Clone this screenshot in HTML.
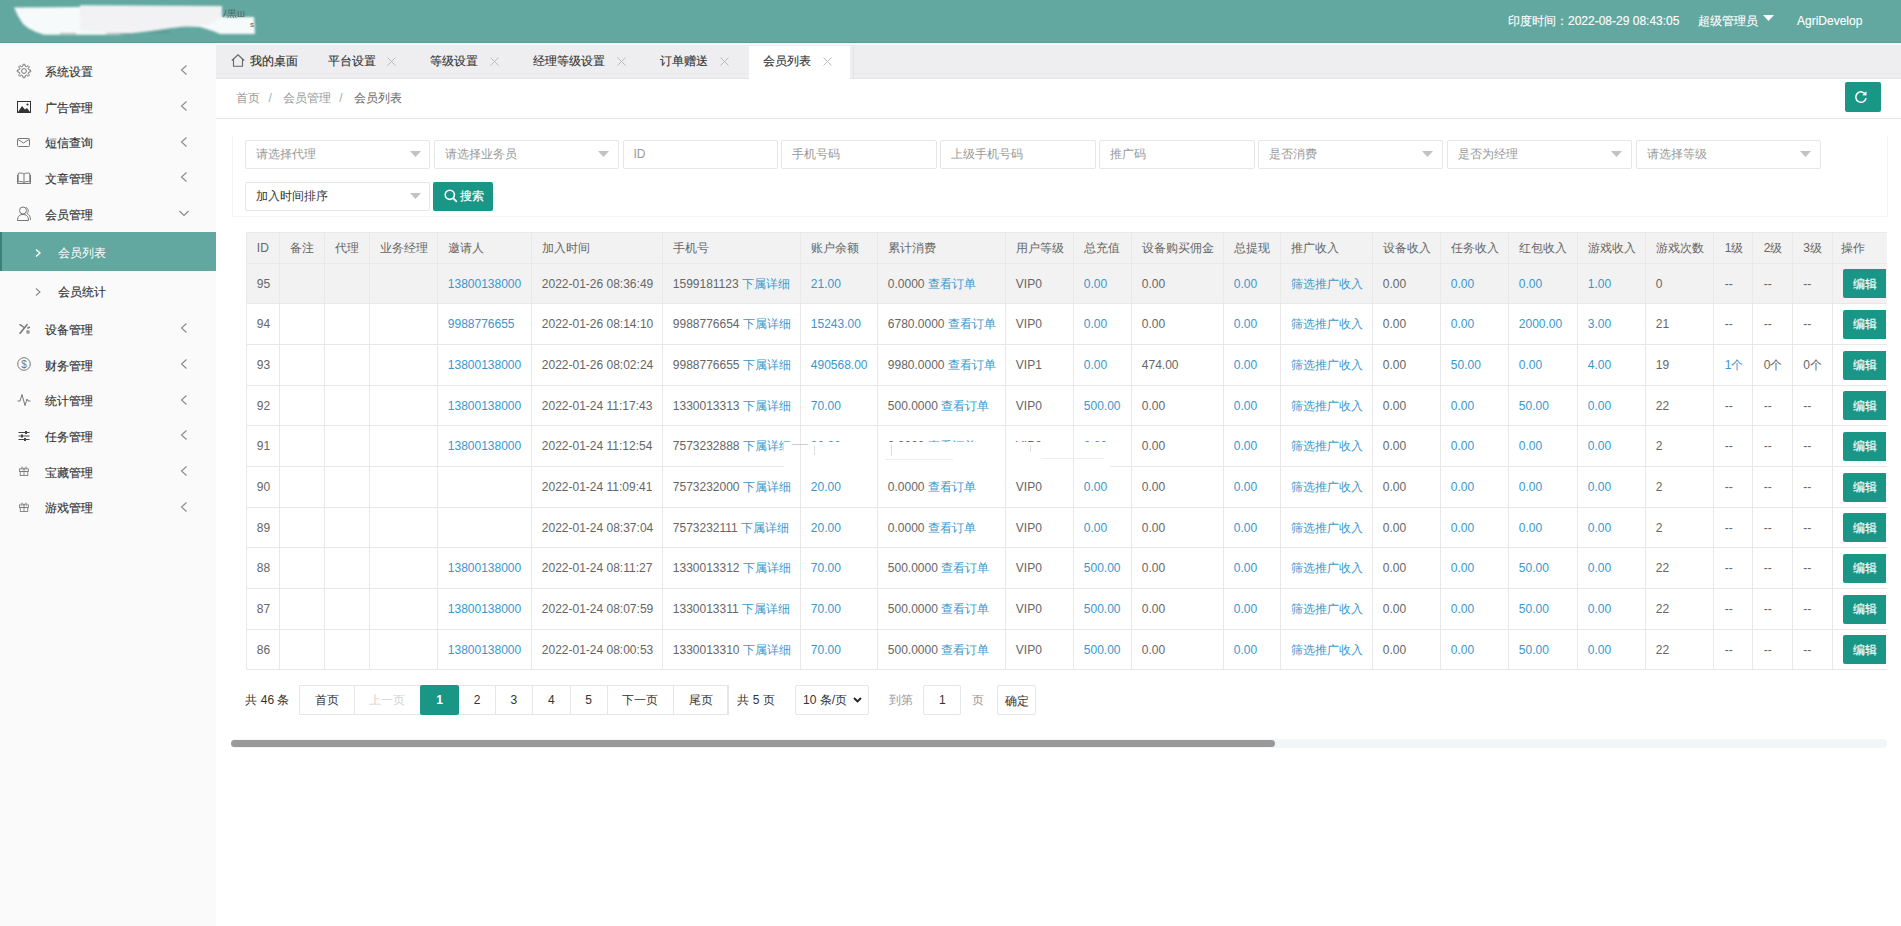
<!DOCTYPE html><html><head><meta charset="utf-8"><style>
*{margin:0;padding:0;box-sizing:border-box}
html,body{width:1901px;height:926px;overflow:hidden;background:#fff;font-family:"Liberation Sans",sans-serif;font-size:12px;color:#333}
.t{position:absolute;white-space:nowrap}
.b{-webkit-text-stroke:0.15px currentColor}
.b2{-webkit-text-stroke:0.12px currentColor}
.r{position:absolute}
svg{position:absolute;overflow:visible}
</style></head><body><div class="r" style="left:0px;top:0px;width:1901px;height:43px;background:#62a8a0"></div>
<div class="r" style="left:0px;top:42px;width:1901px;height:1px;background:#5a9c95"></div>
<svg style="left:0;top:0" width="280" height="45"><defs><filter id="bl" x="-10%" y="-30%" width="120%" height="160%"><feGaussianBlur stdDeviation="1"/></filter></defs><g filter="url(#bl)"><polygon points="14,7.5 80,7 80,5.3 222,6 222,17 254,17 255,34 220,34 213,31 200,27 185,26.5 171,28 150,31 118,34.7 44,34.7 36,32 28,28 23,24 18,16" fill="#f6fafa"/><polygon points="80,6 222,6.5 222,17 210,24 185,26.5 150,30 120,33 80,30" fill="#eeeaec" opacity="0.55"/><rect x="60" y="33" width="16" height="1.2" fill="#555" opacity="0.5"/><rect x="106" y="33" width="24" height="1.2" fill="#555" opacity="0.5"/><rect x="150" y="31" width="20" height="1.2" fill="#555" opacity="0.35"/></g><text x="222" y="16.5" font-size="10" fill="#555" opacity="0.8" font-family="Liberation Sans">ﾉ黒ш</text><text x="250" y="27" font-size="8" fill="#555" font-family="Liberation Sans">s</text></svg>
<div class="t b2" style="left:1508px;top:13.10px;line-height:16px;color:#fff;font-size:12px;">印度时间：2022-08-29 08:43:05</div>
<div class="t b2" style="left:1697.5px;top:13.10px;line-height:16px;color:#fff;font-size:12px;">超级管理员</div>
<svg style="left:1763px;top:15px" width="11" height="7"><polygon points="0,0 11,0 5.5,6" fill="#fff"/></svg>
<div class="t b2" style="left:1797px;top:13.10px;line-height:16px;color:#fff;font-size:12px;">AgriDevelop</div>
<div class="r" style="left:0px;top:43px;width:216px;height:883px;background:#fafafa"></div>
<svg style="left:16.6px;top:64.10000000000001px" width="14" height="14" viewBox="0 0 14 14"><path d="M11.88 5.91 L13.74 6.12 L13.74 7.88 L11.88 8.09 L11.22 9.68 L12.39 11.14 L11.14 12.39 L9.68 11.22 L8.09 11.88 L7.88 13.74 L6.12 13.74 L5.91 11.88 L4.32 11.22 L2.86 12.39 L1.61 11.14 L2.78 9.68 L2.12 8.09 L0.26 7.88 L0.26 6.12 L2.12 5.91 L2.78 4.32 L1.61 2.86 L2.86 1.61 L4.32 2.78 L5.91 2.12 L6.12 0.26 L7.88 0.26 L8.09 2.12 L9.68 2.78 L11.14 1.61 L12.39 2.86 L11.22 4.32Z" fill="none" stroke="#777" stroke-width="1" stroke-linejoin="round"/><circle cx="7" cy="7" r="2.4" fill="none" stroke="#777" stroke-width="1"/></svg>
<div class="t b" style="left:44.7px;top:63.90px;line-height:16px;color:#333;font-size:12px;">系统设置</div>
<svg style="left:179.7px;top:65.2px" width="8" height="10" viewBox="0 0 8 10"><path d="M6.5 0.5 L1.5 5 L6.5 9.5" fill="none" stroke="#888" stroke-width="1.1"/></svg>
<svg style="left:16.6px;top:100.8px" width="14" height="12" viewBox="0 0 14 12"><rect x="0.5" y="0.5" width="13" height="11" fill="none" stroke="#333" stroke-width="1"/><path d="M1 11 L5 5 L8 8.5 L10 7 L13 11 Z" fill="#333"/><circle cx="10.5" cy="3.5" r="1.1" fill="#333"/></svg>
<div class="t b" style="left:44.7px;top:99.60px;line-height:16px;color:#333;font-size:12px;">广告管理</div>
<svg style="left:179.7px;top:100.89999999999999px" width="8" height="10" viewBox="0 0 8 10"><path d="M6.5 0.5 L1.5 5 L6.5 9.5" fill="none" stroke="#888" stroke-width="1.1"/></svg>
<svg style="left:17.1px;top:138.0px" width="13" height="9" viewBox="0 0 13 9"><rect x="0.5" y="0.5" width="12" height="8" rx="1" fill="none" stroke="#777" stroke-width="1"/><path d="M1 1.5 L6.5 5 L12 1.5" fill="none" stroke="#777" stroke-width="1"/></svg>
<div class="t b" style="left:44.7px;top:135.30px;line-height:16px;color:#333;font-size:12px;">短信查询</div>
<svg style="left:179.7px;top:136.60000000000002px" width="8" height="10" viewBox="0 0 8 10"><path d="M6.5 0.5 L1.5 5 L6.5 9.5" fill="none" stroke="#888" stroke-width="1.1"/></svg>
<svg style="left:16.6px;top:172.2px" width="14" height="12" viewBox="0 0 14 12"><path d="M7 2 C5 0.8 3 0.8 1.2 1.5 V10 C3 9.3 5 9.3 7 10.5 C9 9.3 11 9.3 12.8 10 V1.5 C11 0.8 9 0.8 7 2 Z M7 2 V10.5 M0.5 3 V11.5 H13.5 V3" fill="none" stroke="#777" stroke-width="1"/></svg>
<div class="t b" style="left:44.7px;top:171.00px;line-height:16px;color:#333;font-size:12px;">文章管理</div>
<svg style="left:179.7px;top:172.3px" width="8" height="10" viewBox="0 0 8 10"><path d="M6.5 0.5 L1.5 5 L6.5 9.5" fill="none" stroke="#888" stroke-width="1.1"/></svg>
<svg style="left:16.6px;top:206.39999999999998px" width="14" height="15" viewBox="0 0 14 15"><circle cx="6" cy="4.5" r="3.5" fill="none" stroke="#777" stroke-width="1"/><path d="M0.5 14.5 C0.5 10 3 8.5 6 8.5 C9 8.5 11.5 10 11.5 14.5 Z" fill="none" stroke="#777" stroke-width="1"/><path d="M9 1.5 C11.5 2 12 6 10 7.5 C12.5 8.5 13.5 11 13.5 14" fill="none" stroke="#777" stroke-width="0.9"/></svg>
<div class="t b" style="left:44.7px;top:206.70px;line-height:16px;color:#333;font-size:12px;">会员管理</div>
<svg style="left:178.5px;top:210.0px" width="10" height="7" viewBox="0 0 10 7"><path d="M0.5 1 L5 5.5 L9.5 1" fill="none" stroke="#888" stroke-width="1.1"/></svg>
<div class="r" style="left:0px;top:232.1px;width:216px;height:39.3px;background:#62a8a0"></div>
<div class="r" style="left:0px;top:232.1px;width:2px;height:39.3px;background:#3e7f78"></div>
<svg style="left:34.5px;top:248.5px" width="6" height="8" viewBox="0 0 6 8"><path d="M1 0.5 L5 4 L1 7.5" fill="none" stroke="#fff" stroke-width="1.4"/></svg>
<div class="t " style="left:57.7px;top:244.50px;line-height:16px;color:#fff;font-size:12px;">会员列表</div>
<svg style="left:34.5px;top:288px" width="6" height="8" viewBox="0 0 6 8"><path d="M1 0.5 L5 4 L1 7.5" fill="none" stroke="#888" stroke-width="1.1"/></svg>
<div class="t b" style="left:57.7px;top:284.00px;line-height:16px;color:#333;font-size:12px;">会员统计</div>
<svg style="left:17.6px;top:322.59999999999997px" width="12" height="12" viewBox="0 0 12 12"><path d="M2 1.7 L5.4 4" stroke="#777" stroke-width="1.5" stroke-linecap="round"/><path d="M9 1.7 L2.1 10.2" stroke="#777" stroke-width="1.6" stroke-linecap="round"/><ellipse cx="10.6" cy="4.6" rx="1.6" ry="1" transform="rotate(-20 10.6 4.6)" fill="#777"/><circle cx="10" cy="9" r="1.9" fill="#999"/></svg>
<div class="t b" style="left:44.7px;top:321.90px;line-height:16px;color:#333;font-size:12px;">设备管理</div>
<svg style="left:179.7px;top:323.2px" width="8" height="10" viewBox="0 0 8 10"><path d="M6.5 0.5 L1.5 5 L6.5 9.5" fill="none" stroke="#888" stroke-width="1.1"/></svg>
<svg style="left:16.6px;top:357.3px" width="14" height="14" viewBox="0 0 14 14"><circle cx="7" cy="7" r="6.3" fill="none" stroke="#777" stroke-width="1"/><text x="7" y="10.5" font-size="10" text-anchor="middle" fill="#777" font-family="Liberation Sans">$</text></svg>
<div class="t b" style="left:44.7px;top:357.60px;line-height:16px;color:#333;font-size:12px;">财务管理</div>
<svg style="left:179.7px;top:358.90000000000003px" width="8" height="10" viewBox="0 0 8 10"><path d="M6.5 0.5 L1.5 5 L6.5 9.5" fill="none" stroke="#888" stroke-width="1.1"/></svg>
<svg style="left:16.6px;top:393.0px" width="14" height="14" viewBox="0 0 14 14"><path d="M0.5 8 H3 L5 1.5 L8 12.5 L10 6 L11 8 H13.5" fill="none" stroke="#777" stroke-width="1"/></svg>
<div class="t b" style="left:44.7px;top:393.30px;line-height:16px;color:#333;font-size:12px;">统计管理</div>
<svg style="left:179.7px;top:394.6px" width="8" height="10" viewBox="0 0 8 10"><path d="M6.5 0.5 L1.5 5 L6.5 9.5" fill="none" stroke="#888" stroke-width="1.1"/></svg>
<svg style="left:17.6px;top:429.7px" width="12" height="12" viewBox="0 0 12 12"><path d="M0.5 2.5 H11.5 M0.5 6 H11.5 M0.5 9.5 H11.5" stroke="#444" stroke-width="1"/><rect x="7" y="1" width="2" height="3" fill="#444"/><rect x="3" y="4.5" width="2" height="3" fill="#444"/><rect x="6" y="8" width="2" height="3" fill="#444"/></svg>
<div class="t b" style="left:44.7px;top:429.00px;line-height:16px;color:#333;font-size:12px;">任务管理</div>
<svg style="left:179.7px;top:430.3px" width="8" height="10" viewBox="0 0 8 10"><path d="M6.5 0.5 L1.5 5 L6.5 9.5" fill="none" stroke="#888" stroke-width="1.1"/></svg>
<svg style="left:18.6px;top:466.4px" width="10" height="10" viewBox="0 0 12 12"><rect x="0.5" y="3.5" width="11" height="3" fill="none" stroke="#777"/><rect x="1.5" y="6.5" width="9" height="5" fill="none" stroke="#777"/><path d="M6 3.5 V11.5 M6 3.5 C4 0 1.5 1.5 3.5 3.5 M6 3.5 C8 0 10.5 1.5 8.5 3.5" fill="none" stroke="#777"/></svg>
<div class="t b" style="left:44.7px;top:464.70px;line-height:16px;color:#333;font-size:12px;">宝藏管理</div>
<svg style="left:179.7px;top:466.0px" width="8" height="10" viewBox="0 0 8 10"><path d="M6.5 0.5 L1.5 5 L6.5 9.5" fill="none" stroke="#888" stroke-width="1.1"/></svg>
<svg style="left:18.6px;top:502.09999999999997px" width="10" height="10" viewBox="0 0 12 12"><rect x="0.5" y="3.5" width="11" height="3" fill="none" stroke="#777"/><rect x="1.5" y="6.5" width="9" height="5" fill="none" stroke="#777"/><path d="M6 3.5 V11.5 M6 3.5 C4 0 1.5 1.5 3.5 3.5 M6 3.5 C8 0 10.5 1.5 8.5 3.5" fill="none" stroke="#777"/></svg>
<div class="t b" style="left:44.7px;top:500.40px;line-height:16px;color:#333;font-size:12px;">游戏管理</div>
<svg style="left:179.7px;top:501.7px" width="8" height="10" viewBox="0 0 8 10"><path d="M6.5 0.5 L1.5 5 L6.5 9.5" fill="none" stroke="#888" stroke-width="1.1"/></svg>
<div class="r" style="left:216px;top:43px;width:1685px;height:36px;background:#eeeef0"></div>
<div class="r" style="left:0px;top:43px;width:1901px;height:1.5px;background:#eef9f7"></div>
<div class="r" style="left:216px;top:73px;width:1685px;height:1px;background:#e9e9eb"></div>
<div class="r" style="left:216px;top:78px;width:1685px;height:1px;background:#e4e4e6"></div>
<svg style="left:231px;top:54px" width="14" height="13" viewBox="0 0 14 13"><path d="M0.8 6.5 L7 0.8 L13.2 6.5 M2.5 5 V12.3 H11.5 V5" fill="none" stroke="#666" stroke-width="1.1"/></svg>
<div class="t b" style="left:249.7px;top:53.20px;line-height:16px;color:#333;font-size:12px;">我的桌面</div>
<div class="t b2" style="left:328px;top:53.20px;line-height:16px;color:#333;font-size:12px;">平台设置</div>
<svg style="left:387.0px;top:57.0px" width="9" height="9" viewBox="0 0 9 9"><path d="M0.5 0.5 L8.5 8.5 M8.5 0.5 L0.5 8.5" stroke="#bbb" stroke-width="1"/></svg>
<div class="t b2" style="left:429.8px;top:53.20px;line-height:16px;color:#333;font-size:12px;">等级设置</div>
<svg style="left:490.2px;top:57.0px" width="9" height="9" viewBox="0 0 9 9"><path d="M0.5 0.5 L8.5 8.5 M8.5 0.5 L0.5 8.5" stroke="#bbb" stroke-width="1"/></svg>
<div class="t b2" style="left:533.3px;top:53.20px;line-height:16px;color:#333;font-size:12px;">经理等级设置</div>
<svg style="left:616.8px;top:57.0px" width="9" height="9" viewBox="0 0 9 9"><path d="M0.5 0.5 L8.5 8.5 M8.5 0.5 L0.5 8.5" stroke="#bbb" stroke-width="1"/></svg>
<div class="t b2" style="left:660px;top:53.20px;line-height:16px;color:#333;font-size:12px;">订单赠送</div>
<svg style="left:720.0px;top:57.0px" width="9" height="9" viewBox="0 0 9 9"><path d="M0.5 0.5 L8.5 8.5 M8.5 0.5 L0.5 8.5" stroke="#bbb" stroke-width="1"/></svg>
<div class="r" style="left:749.2px;top:45.5px;width:101.3px;height:33.5px;background:#fff"></div>
<div class="r" style="left:852.5px;top:45.5px;width:1px;height:33.5px;background:#e2e2e4"></div>
<div class="t b2" style="left:763.4px;top:53.20px;line-height:16px;color:#333;font-size:12px;">会员列表</div>
<svg style="left:823.2px;top:57.0px" width="9" height="9" viewBox="0 0 9 9"><path d="M0.5 0.5 L8.5 8.5 M8.5 0.5 L0.5 8.5" stroke="#bbb" stroke-width="1"/></svg>
<div class="t " style="left:236.2px;top:89.70px;line-height:16px;color:#999;font-size:12px;">首页</div>
<div class="t " style="left:268.5px;top:89.70px;line-height:16px;color:#aaa;font-size:12px;">/</div>
<div class="t " style="left:282.5px;top:89.70px;line-height:16px;color:#999;font-size:12px;">会员管理</div>
<div class="t " style="left:339.2px;top:89.70px;line-height:16px;color:#aaa;font-size:12px;">/</div>
<div class="t " style="left:354px;top:89.70px;line-height:16px;color:#666;font-size:12px;">会员列表</div>
<div class="r" style="left:216px;top:118px;width:1685px;height:1px;background:#e6e6e6"></div>
<div class="r" style="left:1844.6px;top:82.2px;width:36.4px;height:29.8px;background:#1a9687;border-radius:2px"></div>
<svg style="left:1854px;top:90px" width="14" height="14" viewBox="0 0 14 14"><path d="M11.6 4.6 A5.2 5.2 0 1 0 12.1 8.2" fill="none" stroke="#fff" stroke-width="1.5"/><path d="M12.6 1.2 L12.4 5.6 L8.2 5.2 Z" fill="#fff"/></svg>
<div class="r" style="left:231.5px;top:136px;width:1656.5px;height:81px;border:1px solid #f4f4f4;border-top:none;background:#fff"></div>
<div class="r" style="left:244.8px;top:140px;width:185.7px;height:28.80000000000001px;border:1px solid #e6e6e6;background:#fff;border-radius:2px"></div>
<div class="t " style="left:255.8px;top:146.40px;line-height:16px;color:#999;font-size:12px;">请选择代理</div>
<svg style="left:409.5px;top:151.4px" width="11" height="6"><polygon points="0,0 11,0 5.5,6" fill="#c2c2c2"/></svg>
<div class="r" style="left:433.5px;top:140px;width:185.20000000000005px;height:28.80000000000001px;border:1px solid #e6e6e6;background:#fff;border-radius:2px"></div>
<div class="t " style="left:444.5px;top:146.40px;line-height:16px;color:#999;font-size:12px;">请选择业务员</div>
<svg style="left:597.7px;top:151.4px" width="11" height="6"><polygon points="0,0 11,0 5.5,6" fill="#c2c2c2"/></svg>
<div class="r" style="left:622.5px;top:140px;width:155.89999999999998px;height:28.80000000000001px;border:1px solid #e6e6e6;background:#fff;border-radius:2px"></div>
<div class="t " style="left:633.5px;top:146.40px;line-height:16px;color:#999;font-size:12px;">ID</div>
<div class="r" style="left:781.3px;top:140px;width:155.5px;height:28.80000000000001px;border:1px solid #e6e6e6;background:#fff;border-radius:2px"></div>
<div class="t " style="left:792.3px;top:146.40px;line-height:16px;color:#999;font-size:12px;">手机号码</div>
<div class="r" style="left:940.1px;top:140px;width:155.60000000000002px;height:28.80000000000001px;border:1px solid #e6e6e6;background:#fff;border-radius:2px"></div>
<div class="t " style="left:951.1px;top:146.40px;line-height:16px;color:#999;font-size:12px;">上级手机号码</div>
<div class="r" style="left:1099px;top:140px;width:156px;height:28.80000000000001px;border:1px solid #e6e6e6;background:#fff;border-radius:2px"></div>
<div class="t " style="left:1110px;top:146.40px;line-height:16px;color:#999;font-size:12px;">推广码</div>
<div class="r" style="left:1258.3px;top:140px;width:184.79999999999995px;height:28.80000000000001px;border:1px solid #e6e6e6;background:#fff;border-radius:2px"></div>
<div class="t " style="left:1269.3px;top:146.40px;line-height:16px;color:#999;font-size:12px;">是否消费</div>
<svg style="left:1422.1px;top:151.4px" width="11" height="6"><polygon points="0,0 11,0 5.5,6" fill="#c2c2c2"/></svg>
<div class="r" style="left:1446.6px;top:140px;width:185.4000000000001px;height:28.80000000000001px;border:1px solid #e6e6e6;background:#fff;border-radius:2px"></div>
<div class="t " style="left:1457.6px;top:146.40px;line-height:16px;color:#999;font-size:12px;">是否为经理</div>
<svg style="left:1611px;top:151.4px" width="11" height="6"><polygon points="0,0 11,0 5.5,6" fill="#c2c2c2"/></svg>
<div class="r" style="left:1635.9px;top:140px;width:185.29999999999995px;height:28.80000000000001px;border:1px solid #e6e6e6;background:#fff;border-radius:2px"></div>
<div class="t " style="left:1646.9px;top:146.40px;line-height:16px;color:#999;font-size:12px;">请选择等级</div>
<svg style="left:1800.2px;top:151.4px" width="11" height="6"><polygon points="0,0 11,0 5.5,6" fill="#c2c2c2"/></svg>
<div class="r" style="left:244.8px;top:181.8px;width:185.7px;height:28.899999999999977px;border:1px solid #e6e6e6;background:#fff;border-radius:2px"></div>
<div class="t " style="left:255.8px;top:188.25px;line-height:16px;color:#333;font-size:12px;">加入时间排序</div>
<svg style="left:409.5px;top:193.25px" width="11" height="6"><polygon points="0,0 11,0 5.5,6" fill="#c2c2c2"/></svg>
<div class="r" style="left:433px;top:181.6px;width:60.3px;height:29.1px;background:#1a9687;border-radius:2px"></div>
<svg style="left:443.5px;top:189px" width="14" height="14" viewBox="0 0 14 14"><circle cx="5.8" cy="5.8" r="4.6" fill="none" stroke="#fff" stroke-width="1.6"/><path d="M9.2 9.2 L12.8 12.8" stroke="#fff" stroke-width="1.8"/></svg>
<div class="t b" style="left:460px;top:188.20px;line-height:16px;color:#fff;font-size:12px;">搜索</div>
<div class="r" style="left:0;top:0;width:1887px;height:926px;overflow:hidden">
<div class="r" style="left:246.5px;top:232px;width:1659.5px;height:31px;background:#f2f2f2"></div>
<div class="r" style="left:246px;top:263px;width:1660px;height:40px;background:#f2f2f2"></div>
<div class="r" style="left:246px;top:232px;width:1660px;height:1px;background:#e8e8e8"></div>
<div class="r" style="left:246px;top:263px;width:1660px;height:1px;background:#e8e8e8"></div>
<div class="r" style="left:246px;top:303px;width:1660px;height:1px;background:#e8e8e8"></div>
<div class="r" style="left:246px;top:344px;width:1660px;height:1px;background:#e8e8e8"></div>
<div class="r" style="left:246px;top:385px;width:1660px;height:1px;background:#e8e8e8"></div>
<div class="r" style="left:246px;top:425px;width:1660px;height:1px;background:#e8e8e8"></div>
<div class="r" style="left:246px;top:466px;width:1660px;height:1px;background:#e8e8e8"></div>
<div class="r" style="left:246px;top:507px;width:1660px;height:1px;background:#e8e8e8"></div>
<div class="r" style="left:246px;top:547px;width:1660px;height:1px;background:#e8e8e8"></div>
<div class="r" style="left:246px;top:588px;width:1660px;height:1px;background:#e8e8e8"></div>
<div class="r" style="left:246px;top:629px;width:1660px;height:1px;background:#e8e8e8"></div>
<div class="r" style="left:246px;top:669px;width:1660px;height:1px;background:#e8e8e8"></div>
<div class="r" style="left:246px;top:232px;width:1px;height:438px;background:#e8e8e8"></div>
<div class="r" style="left:279px;top:232px;width:1px;height:438px;background:#e8e8e8"></div>
<div class="r" style="left:324px;top:232px;width:1px;height:438px;background:#e8e8e8"></div>
<div class="r" style="left:369px;top:232px;width:1px;height:438px;background:#e8e8e8"></div>
<div class="r" style="left:437px;top:232px;width:1px;height:438px;background:#e8e8e8"></div>
<div class="r" style="left:531px;top:232px;width:1px;height:438px;background:#e8e8e8"></div>
<div class="r" style="left:662px;top:232px;width:1px;height:438px;background:#e8e8e8"></div>
<div class="r" style="left:800px;top:232px;width:1px;height:438px;background:#e8e8e8"></div>
<div class="r" style="left:877px;top:232px;width:1px;height:438px;background:#e8e8e8"></div>
<div class="r" style="left:1005px;top:232px;width:1px;height:438px;background:#e8e8e8"></div>
<div class="r" style="left:1073px;top:232px;width:1px;height:438px;background:#e8e8e8"></div>
<div class="r" style="left:1131px;top:232px;width:1px;height:438px;background:#e8e8e8"></div>
<div class="r" style="left:1223px;top:232px;width:1px;height:438px;background:#e8e8e8"></div>
<div class="r" style="left:1280px;top:232px;width:1px;height:438px;background:#e8e8e8"></div>
<div class="r" style="left:1372px;top:232px;width:1px;height:438px;background:#e8e8e8"></div>
<div class="r" style="left:1440px;top:232px;width:1px;height:438px;background:#e8e8e8"></div>
<div class="r" style="left:1508px;top:232px;width:1px;height:438px;background:#e8e8e8"></div>
<div class="r" style="left:1577px;top:232px;width:1px;height:438px;background:#e8e8e8"></div>
<div class="r" style="left:1645px;top:232px;width:1px;height:438px;background:#e8e8e8"></div>
<div class="r" style="left:1713px;top:232px;width:1px;height:438px;background:#e8e8e8"></div>
<div class="r" style="left:1752px;top:232px;width:1px;height:438px;background:#e8e8e8"></div>
<div class="r" style="left:1792px;top:232px;width:1px;height:438px;background:#e8e8e8"></div>
<div class="r" style="left:1832px;top:232px;width:1px;height:438px;background:#e8e8e8"></div>
<div class="t " style="left:256.8px;top:239.80px;line-height:16px;color:#666;font-size:12px;">ID</div>
<div class="t " style="left:289.8px;top:239.80px;line-height:16px;color:#666;font-size:12px;">备注</div>
<div class="t " style="left:334.8px;top:239.80px;line-height:16px;color:#666;font-size:12px;">代理</div>
<div class="t " style="left:379.8px;top:239.80px;line-height:16px;color:#666;font-size:12px;">业务经理</div>
<div class="t " style="left:447.8px;top:239.80px;line-height:16px;color:#666;font-size:12px;">邀请人</div>
<div class="t " style="left:541.8px;top:239.80px;line-height:16px;color:#666;font-size:12px;">加入时间</div>
<div class="t " style="left:672.8px;top:239.80px;line-height:16px;color:#666;font-size:12px;">手机号</div>
<div class="t " style="left:810.8px;top:239.80px;line-height:16px;color:#666;font-size:12px;">账户余额</div>
<div class="t " style="left:887.8px;top:239.80px;line-height:16px;color:#666;font-size:12px;">累计消费</div>
<div class="t " style="left:1015.8px;top:239.80px;line-height:16px;color:#666;font-size:12px;">用户等级</div>
<div class="t " style="left:1083.8px;top:239.80px;line-height:16px;color:#666;font-size:12px;">总充值</div>
<div class="t " style="left:1141.8px;top:239.80px;line-height:16px;color:#666;font-size:12px;">设备购买佣金</div>
<div class="t " style="left:1233.8px;top:239.80px;line-height:16px;color:#666;font-size:12px;">总提现</div>
<div class="t " style="left:1290.8px;top:239.80px;line-height:16px;color:#666;font-size:12px;">推广收入</div>
<div class="t " style="left:1382.8px;top:239.80px;line-height:16px;color:#666;font-size:12px;">设备收入</div>
<div class="t " style="left:1450.8px;top:239.80px;line-height:16px;color:#666;font-size:12px;">任务收入</div>
<div class="t " style="left:1518.8px;top:239.80px;line-height:16px;color:#666;font-size:12px;">红包收入</div>
<div class="t " style="left:1587.8px;top:239.80px;line-height:16px;color:#666;font-size:12px;">游戏收入</div>
<div class="t " style="left:1655.8px;top:239.80px;line-height:16px;color:#666;font-size:12px;">游戏次数</div>
<div class="t " style="left:1724.8px;top:239.80px;line-height:16px;color:#666;font-size:12px;">1级</div>
<div class="t " style="left:1763.8px;top:239.80px;line-height:16px;color:#666;font-size:12px;">2级</div>
<div class="t " style="left:1803.3px;top:239.80px;line-height:16px;color:#666;font-size:12px;">3级</div>
<div class="t " style="left:1841.3px;top:239.80px;line-height:16px;color:#666;font-size:12px;">操作</div>
<div class="t " style="left:256.8px;top:275.50px;line-height:16px;color:#666;font-size:12px;">95</div>
<div class="t " style="left:447.8px;top:275.50px;line-height:16px;color:#3a97cd;font-size:12px;">13800138000</div>
<div class="t " style="left:541.8px;top:275.50px;line-height:16px;color:#666;font-size:12px;">2022-01-26 08:36:49</div>
<div class="t " style="left:672.8px;top:275.50px;line-height:16px;color:#666;font-size:12px;">1599181123 <span style="color:#3a97cd">下属详细</span></div>
<div class="t " style="left:810.8px;top:275.50px;line-height:16px;color:#3a97cd;font-size:12px;">21.00</div>
<div class="t " style="left:887.8px;top:275.50px;line-height:16px;color:#666;font-size:12px;">0.0000 <span style="color:#3a97cd">查看订单</span></div>
<div class="t " style="left:1015.8px;top:275.50px;line-height:16px;color:#666;font-size:12px;">VIP0</div>
<div class="t " style="left:1083.8px;top:275.50px;line-height:16px;color:#3a97cd;font-size:12px;">0.00</div>
<div class="t " style="left:1141.8px;top:275.50px;line-height:16px;color:#666;font-size:12px;">0.00</div>
<div class="t " style="left:1233.8px;top:275.50px;line-height:16px;color:#3a97cd;font-size:12px;">0.00</div>
<div class="t " style="left:1290.8px;top:275.50px;line-height:16px;color:#3a97cd;font-size:12px;">筛选推广收入</div>
<div class="t " style="left:1382.8px;top:275.50px;line-height:16px;color:#666;font-size:12px;">0.00</div>
<div class="t " style="left:1450.8px;top:275.50px;line-height:16px;color:#3a97cd;font-size:12px;">0.00</div>
<div class="t " style="left:1518.8px;top:275.50px;line-height:16px;color:#3a97cd;font-size:12px;">0.00</div>
<div class="t " style="left:1587.8px;top:275.50px;line-height:16px;color:#3a97cd;font-size:12px;">1.00</div>
<div class="t " style="left:1655.8px;top:275.50px;line-height:16px;color:#666;font-size:12px;">0</div>
<div class="t " style="left:1724.8px;top:275.50px;line-height:16px;color:#666;font-size:12px;">--</div>
<div class="t " style="left:1763.8px;top:275.50px;line-height:16px;color:#666;font-size:12px;">--</div>
<div class="t " style="left:1803.3px;top:275.50px;line-height:16px;color:#666;font-size:12px;">--</div>
<div class="r" style="left:1842.9px;top:269.0px;width:43.1px;height:29px;background:#1a9687;border-radius:2px 0 0 2px"></div>
<div class="t b" style="left:1853px;top:275.50px;line-height:16px;color:#fff;font-size:12px;">编辑</div>
<div class="t " style="left:256.8px;top:316.00px;line-height:16px;color:#666;font-size:12px;">94</div>
<div class="t " style="left:447.8px;top:316.00px;line-height:16px;color:#3a97cd;font-size:12px;">9988776655</div>
<div class="t " style="left:541.8px;top:316.00px;line-height:16px;color:#666;font-size:12px;">2022-01-26 08:14:10</div>
<div class="t " style="left:672.8px;top:316.00px;line-height:16px;color:#666;font-size:12px;">9988776654 <span style="color:#3a97cd">下属详细</span></div>
<div class="t " style="left:810.8px;top:316.00px;line-height:16px;color:#3a97cd;font-size:12px;">15243.00</div>
<div class="t " style="left:887.8px;top:316.00px;line-height:16px;color:#666;font-size:12px;">6780.0000 <span style="color:#3a97cd">查看订单</span></div>
<div class="t " style="left:1015.8px;top:316.00px;line-height:16px;color:#666;font-size:12px;">VIP0</div>
<div class="t " style="left:1083.8px;top:316.00px;line-height:16px;color:#3a97cd;font-size:12px;">0.00</div>
<div class="t " style="left:1141.8px;top:316.00px;line-height:16px;color:#666;font-size:12px;">0.00</div>
<div class="t " style="left:1233.8px;top:316.00px;line-height:16px;color:#3a97cd;font-size:12px;">0.00</div>
<div class="t " style="left:1290.8px;top:316.00px;line-height:16px;color:#3a97cd;font-size:12px;">筛选推广收入</div>
<div class="t " style="left:1382.8px;top:316.00px;line-height:16px;color:#666;font-size:12px;">0.00</div>
<div class="t " style="left:1450.8px;top:316.00px;line-height:16px;color:#3a97cd;font-size:12px;">0.00</div>
<div class="t " style="left:1518.8px;top:316.00px;line-height:16px;color:#3a97cd;font-size:12px;">2000.00</div>
<div class="t " style="left:1587.8px;top:316.00px;line-height:16px;color:#3a97cd;font-size:12px;">3.00</div>
<div class="t " style="left:1655.8px;top:316.00px;line-height:16px;color:#666;font-size:12px;">21</div>
<div class="t " style="left:1724.8px;top:316.00px;line-height:16px;color:#666;font-size:12px;">--</div>
<div class="t " style="left:1763.8px;top:316.00px;line-height:16px;color:#666;font-size:12px;">--</div>
<div class="t " style="left:1803.3px;top:316.00px;line-height:16px;color:#666;font-size:12px;">--</div>
<div class="r" style="left:1842.9px;top:309.5px;width:43.1px;height:29px;background:#1a9687;border-radius:2px 0 0 2px"></div>
<div class="t b" style="left:1853px;top:316.00px;line-height:16px;color:#fff;font-size:12px;">编辑</div>
<div class="t " style="left:256.8px;top:357.00px;line-height:16px;color:#666;font-size:12px;">93</div>
<div class="t " style="left:447.8px;top:357.00px;line-height:16px;color:#3a97cd;font-size:12px;">13800138000</div>
<div class="t " style="left:541.8px;top:357.00px;line-height:16px;color:#666;font-size:12px;">2022-01-26 08:02:24</div>
<div class="t " style="left:672.8px;top:357.00px;line-height:16px;color:#666;font-size:12px;">9988776655 <span style="color:#3a97cd">下属详细</span></div>
<div class="t " style="left:810.8px;top:357.00px;line-height:16px;color:#3a97cd;font-size:12px;">490568.00</div>
<div class="t " style="left:887.8px;top:357.00px;line-height:16px;color:#666;font-size:12px;">9980.0000 <span style="color:#3a97cd">查看订单</span></div>
<div class="t " style="left:1015.8px;top:357.00px;line-height:16px;color:#666;font-size:12px;">VIP1</div>
<div class="t " style="left:1083.8px;top:357.00px;line-height:16px;color:#3a97cd;font-size:12px;">0.00</div>
<div class="t " style="left:1141.8px;top:357.00px;line-height:16px;color:#666;font-size:12px;">474.00</div>
<div class="t " style="left:1233.8px;top:357.00px;line-height:16px;color:#3a97cd;font-size:12px;">0.00</div>
<div class="t " style="left:1290.8px;top:357.00px;line-height:16px;color:#3a97cd;font-size:12px;">筛选推广收入</div>
<div class="t " style="left:1382.8px;top:357.00px;line-height:16px;color:#666;font-size:12px;">0.00</div>
<div class="t " style="left:1450.8px;top:357.00px;line-height:16px;color:#3a97cd;font-size:12px;">50.00</div>
<div class="t " style="left:1518.8px;top:357.00px;line-height:16px;color:#3a97cd;font-size:12px;">0.00</div>
<div class="t " style="left:1587.8px;top:357.00px;line-height:16px;color:#3a97cd;font-size:12px;">4.00</div>
<div class="t " style="left:1655.8px;top:357.00px;line-height:16px;color:#666;font-size:12px;">19</div>
<div class="t " style="left:1724.8px;top:357.00px;line-height:16px;color:#3a97cd;font-size:12px;">1个</div>
<div class="t " style="left:1763.8px;top:357.00px;line-height:16px;color:#666;font-size:12px;">0个</div>
<div class="t " style="left:1803.3px;top:357.00px;line-height:16px;color:#666;font-size:12px;">0个</div>
<div class="r" style="left:1842.9px;top:350.5px;width:43.1px;height:29px;background:#1a9687;border-radius:2px 0 0 2px"></div>
<div class="t b" style="left:1853px;top:357.00px;line-height:16px;color:#fff;font-size:12px;">编辑</div>
<div class="t " style="left:256.8px;top:397.50px;line-height:16px;color:#666;font-size:12px;">92</div>
<div class="t " style="left:447.8px;top:397.50px;line-height:16px;color:#3a97cd;font-size:12px;">13800138000</div>
<div class="t " style="left:541.8px;top:397.50px;line-height:16px;color:#666;font-size:12px;">2022-01-24 11:17:43</div>
<div class="t " style="left:672.8px;top:397.50px;line-height:16px;color:#666;font-size:12px;">1330013313 <span style="color:#3a97cd">下属详细</span></div>
<div class="t " style="left:810.8px;top:397.50px;line-height:16px;color:#3a97cd;font-size:12px;">70.00</div>
<div class="t " style="left:887.8px;top:397.50px;line-height:16px;color:#666;font-size:12px;">500.0000 <span style="color:#3a97cd">查看订单</span></div>
<div class="t " style="left:1015.8px;top:397.50px;line-height:16px;color:#666;font-size:12px;">VIP0</div>
<div class="t " style="left:1083.8px;top:397.50px;line-height:16px;color:#3a97cd;font-size:12px;">500.00</div>
<div class="t " style="left:1141.8px;top:397.50px;line-height:16px;color:#666;font-size:12px;">0.00</div>
<div class="t " style="left:1233.8px;top:397.50px;line-height:16px;color:#3a97cd;font-size:12px;">0.00</div>
<div class="t " style="left:1290.8px;top:397.50px;line-height:16px;color:#3a97cd;font-size:12px;">筛选推广收入</div>
<div class="t " style="left:1382.8px;top:397.50px;line-height:16px;color:#666;font-size:12px;">0.00</div>
<div class="t " style="left:1450.8px;top:397.50px;line-height:16px;color:#3a97cd;font-size:12px;">0.00</div>
<div class="t " style="left:1518.8px;top:397.50px;line-height:16px;color:#3a97cd;font-size:12px;">50.00</div>
<div class="t " style="left:1587.8px;top:397.50px;line-height:16px;color:#3a97cd;font-size:12px;">0.00</div>
<div class="t " style="left:1655.8px;top:397.50px;line-height:16px;color:#666;font-size:12px;">22</div>
<div class="t " style="left:1724.8px;top:397.50px;line-height:16px;color:#666;font-size:12px;">--</div>
<div class="t " style="left:1763.8px;top:397.50px;line-height:16px;color:#666;font-size:12px;">--</div>
<div class="t " style="left:1803.3px;top:397.50px;line-height:16px;color:#666;font-size:12px;">--</div>
<div class="r" style="left:1842.9px;top:391.0px;width:43.1px;height:29px;background:#1a9687;border-radius:2px 0 0 2px"></div>
<div class="t b" style="left:1853px;top:397.50px;line-height:16px;color:#fff;font-size:12px;">编辑</div>
<div class="t " style="left:256.8px;top:438.00px;line-height:16px;color:#666;font-size:12px;">91</div>
<div class="t " style="left:447.8px;top:438.00px;line-height:16px;color:#3a97cd;font-size:12px;">13800138000</div>
<div class="t " style="left:541.8px;top:438.00px;line-height:16px;color:#666;font-size:12px;">2022-01-24 11:12:54</div>
<div class="t " style="left:672.8px;top:438.00px;line-height:16px;color:#666;font-size:12px;">7573232888 <span style="color:#3a97cd">下属详细</span></div>
<div class="t " style="left:810.8px;top:438.00px;line-height:16px;color:#3a97cd;font-size:12px;">20.00</div>
<div class="t " style="left:887.8px;top:438.00px;line-height:16px;color:#666;font-size:12px;">0.0000 <span style="color:#3a97cd">查看订单</span></div>
<div class="t " style="left:1015.8px;top:438.00px;line-height:16px;color:#666;font-size:12px;">VIP0</div>
<div class="t " style="left:1083.8px;top:438.00px;line-height:16px;color:#3a97cd;font-size:12px;">0.00</div>
<div class="t " style="left:1141.8px;top:438.00px;line-height:16px;color:#666;font-size:12px;">0.00</div>
<div class="t " style="left:1233.8px;top:438.00px;line-height:16px;color:#3a97cd;font-size:12px;">0.00</div>
<div class="t " style="left:1290.8px;top:438.00px;line-height:16px;color:#3a97cd;font-size:12px;">筛选推广收入</div>
<div class="t " style="left:1382.8px;top:438.00px;line-height:16px;color:#666;font-size:12px;">0.00</div>
<div class="t " style="left:1450.8px;top:438.00px;line-height:16px;color:#3a97cd;font-size:12px;">0.00</div>
<div class="t " style="left:1518.8px;top:438.00px;line-height:16px;color:#3a97cd;font-size:12px;">0.00</div>
<div class="t " style="left:1587.8px;top:438.00px;line-height:16px;color:#3a97cd;font-size:12px;">0.00</div>
<div class="t " style="left:1655.8px;top:438.00px;line-height:16px;color:#666;font-size:12px;">2</div>
<div class="t " style="left:1724.8px;top:438.00px;line-height:16px;color:#666;font-size:12px;">--</div>
<div class="t " style="left:1763.8px;top:438.00px;line-height:16px;color:#666;font-size:12px;">--</div>
<div class="t " style="left:1803.3px;top:438.00px;line-height:16px;color:#666;font-size:12px;">--</div>
<div class="r" style="left:1842.9px;top:431.5px;width:43.1px;height:29px;background:#1a9687;border-radius:2px 0 0 2px"></div>
<div class="t b" style="left:1853px;top:438.00px;line-height:16px;color:#fff;font-size:12px;">编辑</div>
<div class="t " style="left:256.8px;top:479.00px;line-height:16px;color:#666;font-size:12px;">90</div>
<div class="t " style="left:541.8px;top:479.00px;line-height:16px;color:#666;font-size:12px;">2022-01-24 11:09:41</div>
<div class="t " style="left:672.8px;top:479.00px;line-height:16px;color:#666;font-size:12px;">7573232000 <span style="color:#3a97cd">下属详细</span></div>
<div class="t " style="left:810.8px;top:479.00px;line-height:16px;color:#3a97cd;font-size:12px;">20.00</div>
<div class="t " style="left:887.8px;top:479.00px;line-height:16px;color:#666;font-size:12px;">0.0000 <span style="color:#3a97cd">查看订单</span></div>
<div class="t " style="left:1015.8px;top:479.00px;line-height:16px;color:#666;font-size:12px;">VIP0</div>
<div class="t " style="left:1083.8px;top:479.00px;line-height:16px;color:#3a97cd;font-size:12px;">0.00</div>
<div class="t " style="left:1141.8px;top:479.00px;line-height:16px;color:#666;font-size:12px;">0.00</div>
<div class="t " style="left:1233.8px;top:479.00px;line-height:16px;color:#3a97cd;font-size:12px;">0.00</div>
<div class="t " style="left:1290.8px;top:479.00px;line-height:16px;color:#3a97cd;font-size:12px;">筛选推广收入</div>
<div class="t " style="left:1382.8px;top:479.00px;line-height:16px;color:#666;font-size:12px;">0.00</div>
<div class="t " style="left:1450.8px;top:479.00px;line-height:16px;color:#3a97cd;font-size:12px;">0.00</div>
<div class="t " style="left:1518.8px;top:479.00px;line-height:16px;color:#3a97cd;font-size:12px;">0.00</div>
<div class="t " style="left:1587.8px;top:479.00px;line-height:16px;color:#3a97cd;font-size:12px;">0.00</div>
<div class="t " style="left:1655.8px;top:479.00px;line-height:16px;color:#666;font-size:12px;">2</div>
<div class="t " style="left:1724.8px;top:479.00px;line-height:16px;color:#666;font-size:12px;">--</div>
<div class="t " style="left:1763.8px;top:479.00px;line-height:16px;color:#666;font-size:12px;">--</div>
<div class="t " style="left:1803.3px;top:479.00px;line-height:16px;color:#666;font-size:12px;">--</div>
<div class="r" style="left:1842.9px;top:472.5px;width:43.1px;height:29px;background:#1a9687;border-radius:2px 0 0 2px"></div>
<div class="t b" style="left:1853px;top:479.00px;line-height:16px;color:#fff;font-size:12px;">编辑</div>
<div class="t " style="left:256.8px;top:519.50px;line-height:16px;color:#666;font-size:12px;">89</div>
<div class="t " style="left:541.8px;top:519.50px;line-height:16px;color:#666;font-size:12px;">2022-01-24 08:37:04</div>
<div class="t " style="left:672.8px;top:519.50px;line-height:16px;color:#666;font-size:12px;">7573232111 <span style="color:#3a97cd">下属详细</span></div>
<div class="t " style="left:810.8px;top:519.50px;line-height:16px;color:#3a97cd;font-size:12px;">20.00</div>
<div class="t " style="left:887.8px;top:519.50px;line-height:16px;color:#666;font-size:12px;">0.0000 <span style="color:#3a97cd">查看订单</span></div>
<div class="t " style="left:1015.8px;top:519.50px;line-height:16px;color:#666;font-size:12px;">VIP0</div>
<div class="t " style="left:1083.8px;top:519.50px;line-height:16px;color:#3a97cd;font-size:12px;">0.00</div>
<div class="t " style="left:1141.8px;top:519.50px;line-height:16px;color:#666;font-size:12px;">0.00</div>
<div class="t " style="left:1233.8px;top:519.50px;line-height:16px;color:#3a97cd;font-size:12px;">0.00</div>
<div class="t " style="left:1290.8px;top:519.50px;line-height:16px;color:#3a97cd;font-size:12px;">筛选推广收入</div>
<div class="t " style="left:1382.8px;top:519.50px;line-height:16px;color:#666;font-size:12px;">0.00</div>
<div class="t " style="left:1450.8px;top:519.50px;line-height:16px;color:#3a97cd;font-size:12px;">0.00</div>
<div class="t " style="left:1518.8px;top:519.50px;line-height:16px;color:#3a97cd;font-size:12px;">0.00</div>
<div class="t " style="left:1587.8px;top:519.50px;line-height:16px;color:#3a97cd;font-size:12px;">0.00</div>
<div class="t " style="left:1655.8px;top:519.50px;line-height:16px;color:#666;font-size:12px;">2</div>
<div class="t " style="left:1724.8px;top:519.50px;line-height:16px;color:#666;font-size:12px;">--</div>
<div class="t " style="left:1763.8px;top:519.50px;line-height:16px;color:#666;font-size:12px;">--</div>
<div class="t " style="left:1803.3px;top:519.50px;line-height:16px;color:#666;font-size:12px;">--</div>
<div class="r" style="left:1842.9px;top:513.0px;width:43.1px;height:29px;background:#1a9687;border-radius:2px 0 0 2px"></div>
<div class="t b" style="left:1853px;top:519.50px;line-height:16px;color:#fff;font-size:12px;">编辑</div>
<div class="t " style="left:256.8px;top:560.00px;line-height:16px;color:#666;font-size:12px;">88</div>
<div class="t " style="left:447.8px;top:560.00px;line-height:16px;color:#3a97cd;font-size:12px;">13800138000</div>
<div class="t " style="left:541.8px;top:560.00px;line-height:16px;color:#666;font-size:12px;">2022-01-24 08:11:27</div>
<div class="t " style="left:672.8px;top:560.00px;line-height:16px;color:#666;font-size:12px;">1330013312 <span style="color:#3a97cd">下属详细</span></div>
<div class="t " style="left:810.8px;top:560.00px;line-height:16px;color:#3a97cd;font-size:12px;">70.00</div>
<div class="t " style="left:887.8px;top:560.00px;line-height:16px;color:#666;font-size:12px;">500.0000 <span style="color:#3a97cd">查看订单</span></div>
<div class="t " style="left:1015.8px;top:560.00px;line-height:16px;color:#666;font-size:12px;">VIP0</div>
<div class="t " style="left:1083.8px;top:560.00px;line-height:16px;color:#3a97cd;font-size:12px;">500.00</div>
<div class="t " style="left:1141.8px;top:560.00px;line-height:16px;color:#666;font-size:12px;">0.00</div>
<div class="t " style="left:1233.8px;top:560.00px;line-height:16px;color:#3a97cd;font-size:12px;">0.00</div>
<div class="t " style="left:1290.8px;top:560.00px;line-height:16px;color:#3a97cd;font-size:12px;">筛选推广收入</div>
<div class="t " style="left:1382.8px;top:560.00px;line-height:16px;color:#666;font-size:12px;">0.00</div>
<div class="t " style="left:1450.8px;top:560.00px;line-height:16px;color:#3a97cd;font-size:12px;">0.00</div>
<div class="t " style="left:1518.8px;top:560.00px;line-height:16px;color:#3a97cd;font-size:12px;">50.00</div>
<div class="t " style="left:1587.8px;top:560.00px;line-height:16px;color:#3a97cd;font-size:12px;">0.00</div>
<div class="t " style="left:1655.8px;top:560.00px;line-height:16px;color:#666;font-size:12px;">22</div>
<div class="t " style="left:1724.8px;top:560.00px;line-height:16px;color:#666;font-size:12px;">--</div>
<div class="t " style="left:1763.8px;top:560.00px;line-height:16px;color:#666;font-size:12px;">--</div>
<div class="t " style="left:1803.3px;top:560.00px;line-height:16px;color:#666;font-size:12px;">--</div>
<div class="r" style="left:1842.9px;top:553.5px;width:43.1px;height:29px;background:#1a9687;border-radius:2px 0 0 2px"></div>
<div class="t b" style="left:1853px;top:560.00px;line-height:16px;color:#fff;font-size:12px;">编辑</div>
<div class="t " style="left:256.8px;top:601.00px;line-height:16px;color:#666;font-size:12px;">87</div>
<div class="t " style="left:447.8px;top:601.00px;line-height:16px;color:#3a97cd;font-size:12px;">13800138000</div>
<div class="t " style="left:541.8px;top:601.00px;line-height:16px;color:#666;font-size:12px;">2022-01-24 08:07:59</div>
<div class="t " style="left:672.8px;top:601.00px;line-height:16px;color:#666;font-size:12px;">1330013311 <span style="color:#3a97cd">下属详细</span></div>
<div class="t " style="left:810.8px;top:601.00px;line-height:16px;color:#3a97cd;font-size:12px;">70.00</div>
<div class="t " style="left:887.8px;top:601.00px;line-height:16px;color:#666;font-size:12px;">500.0000 <span style="color:#3a97cd">查看订单</span></div>
<div class="t " style="left:1015.8px;top:601.00px;line-height:16px;color:#666;font-size:12px;">VIP0</div>
<div class="t " style="left:1083.8px;top:601.00px;line-height:16px;color:#3a97cd;font-size:12px;">500.00</div>
<div class="t " style="left:1141.8px;top:601.00px;line-height:16px;color:#666;font-size:12px;">0.00</div>
<div class="t " style="left:1233.8px;top:601.00px;line-height:16px;color:#3a97cd;font-size:12px;">0.00</div>
<div class="t " style="left:1290.8px;top:601.00px;line-height:16px;color:#3a97cd;font-size:12px;">筛选推广收入</div>
<div class="t " style="left:1382.8px;top:601.00px;line-height:16px;color:#666;font-size:12px;">0.00</div>
<div class="t " style="left:1450.8px;top:601.00px;line-height:16px;color:#3a97cd;font-size:12px;">0.00</div>
<div class="t " style="left:1518.8px;top:601.00px;line-height:16px;color:#3a97cd;font-size:12px;">50.00</div>
<div class="t " style="left:1587.8px;top:601.00px;line-height:16px;color:#3a97cd;font-size:12px;">0.00</div>
<div class="t " style="left:1655.8px;top:601.00px;line-height:16px;color:#666;font-size:12px;">22</div>
<div class="t " style="left:1724.8px;top:601.00px;line-height:16px;color:#666;font-size:12px;">--</div>
<div class="t " style="left:1763.8px;top:601.00px;line-height:16px;color:#666;font-size:12px;">--</div>
<div class="t " style="left:1803.3px;top:601.00px;line-height:16px;color:#666;font-size:12px;">--</div>
<div class="r" style="left:1842.9px;top:594.5px;width:43.1px;height:29px;background:#1a9687;border-radius:2px 0 0 2px"></div>
<div class="t b" style="left:1853px;top:601.00px;line-height:16px;color:#fff;font-size:12px;">编辑</div>
<div class="t " style="left:256.8px;top:641.50px;line-height:16px;color:#666;font-size:12px;">86</div>
<div class="t " style="left:447.8px;top:641.50px;line-height:16px;color:#3a97cd;font-size:12px;">13800138000</div>
<div class="t " style="left:541.8px;top:641.50px;line-height:16px;color:#666;font-size:12px;">2022-01-24 08:00:53</div>
<div class="t " style="left:672.8px;top:641.50px;line-height:16px;color:#666;font-size:12px;">1330013310 <span style="color:#3a97cd">下属详细</span></div>
<div class="t " style="left:810.8px;top:641.50px;line-height:16px;color:#3a97cd;font-size:12px;">70.00</div>
<div class="t " style="left:887.8px;top:641.50px;line-height:16px;color:#666;font-size:12px;">500.0000 <span style="color:#3a97cd">查看订单</span></div>
<div class="t " style="left:1015.8px;top:641.50px;line-height:16px;color:#666;font-size:12px;">VIP0</div>
<div class="t " style="left:1083.8px;top:641.50px;line-height:16px;color:#3a97cd;font-size:12px;">500.00</div>
<div class="t " style="left:1141.8px;top:641.50px;line-height:16px;color:#666;font-size:12px;">0.00</div>
<div class="t " style="left:1233.8px;top:641.50px;line-height:16px;color:#3a97cd;font-size:12px;">0.00</div>
<div class="t " style="left:1290.8px;top:641.50px;line-height:16px;color:#3a97cd;font-size:12px;">筛选推广收入</div>
<div class="t " style="left:1382.8px;top:641.50px;line-height:16px;color:#666;font-size:12px;">0.00</div>
<div class="t " style="left:1450.8px;top:641.50px;line-height:16px;color:#3a97cd;font-size:12px;">0.00</div>
<div class="t " style="left:1518.8px;top:641.50px;line-height:16px;color:#3a97cd;font-size:12px;">50.00</div>
<div class="t " style="left:1587.8px;top:641.50px;line-height:16px;color:#3a97cd;font-size:12px;">0.00</div>
<div class="t " style="left:1655.8px;top:641.50px;line-height:16px;color:#666;font-size:12px;">22</div>
<div class="t " style="left:1724.8px;top:641.50px;line-height:16px;color:#666;font-size:12px;">--</div>
<div class="t " style="left:1763.8px;top:641.50px;line-height:16px;color:#666;font-size:12px;">--</div>
<div class="t " style="left:1803.3px;top:641.50px;line-height:16px;color:#666;font-size:12px;">--</div>
<div class="r" style="left:1842.9px;top:635.0px;width:43.1px;height:29px;background:#1a9687;border-radius:2px 0 0 2px"></div>
<div class="t b" style="left:1853px;top:641.50px;line-height:16px;color:#fff;font-size:12px;">编辑</div>
</div>
<div class="r" style="left:784px;top:441.6px;width:326px;height:27px;background:#fff"></div>
<div class="r" style="left:800px;top:441px;width:1px;height:29px;background:#e8e8e8"></div>
<div class="r" style="left:877px;top:441px;width:1px;height:29px;background:#e8e8e8"></div>
<div class="r" style="left:1005px;top:441px;width:1px;height:29px;background:#e8e8e8"></div>
<div class="r" style="left:1073px;top:441px;width:1px;height:29px;background:#e8e8e8"></div>
<div class="r" style="left:885px;top:459px;width:68px;height:1px;background:#eee"></div>
<div class="r" style="left:792px;top:444px;width:16px;height:1px;background:#ccc"></div>
<div class="r" style="left:1041px;top:458px;width:63px;height:1px;background:#eee"></div>
<div class="r" style="left:814px;top:446px;width:1px;height:9px;background:#ddd"></div>
<div class="r" style="left:891px;top:445px;width:1px;height:11px;background:#ddd"></div>
<div class="r" style="left:1030px;top:445px;width:1px;height:7px;background:#ddd"></div>
<div class="t " style="left:245.4px;top:692.00px;line-height:16px;color:#333;font-size:12px;">共 46 条</div>
<div class="r" style="left:299.4px;top:685px;width:428.6px;height:30px;border:1px solid #e6e6e6;background:#fff"></div>
<div class="r" style="left:354.3px;top:685px;width:1px;height:30px;background:#e6e6e6"></div>
<div class="t" style="left:299.4px;top:692.0px;width:54.900000000000034px;text-align:center;line-height:16px;color:#333;">首页</div>
<div class="r" style="left:420.2px;top:685px;width:1px;height:30px;background:#e6e6e6"></div>
<div class="t" style="left:354.3px;top:692.0px;width:65.89999999999998px;text-align:center;line-height:16px;color:#d2d2d2;">上一页</div>
<div class="r" style="left:420.2px;top:685px;width:38.69999999999999px;height:30px;background:#1a9687;border-radius:2px"></div>
<div class="t" style="left:420.2px;top:692.0px;width:38.69999999999999px;text-align:center;line-height:16px;color:#fff;font-weight:bold;">1</div>
<div class="r" style="left:495.4px;top:685px;width:1px;height:30px;background:#e6e6e6"></div>
<div class="t" style="left:458.9px;top:692.0px;width:36.5px;text-align:center;line-height:16px;color:#333;">2</div>
<div class="r" style="left:532.4px;top:685px;width:1px;height:30px;background:#e6e6e6"></div>
<div class="t" style="left:495.4px;top:692.0px;width:37.0px;text-align:center;line-height:16px;color:#333;">3</div>
<div class="r" style="left:570.2px;top:685px;width:1px;height:30px;background:#e6e6e6"></div>
<div class="t" style="left:532.4px;top:692.0px;width:37.80000000000007px;text-align:center;line-height:16px;color:#333;">4</div>
<div class="r" style="left:607.2px;top:685px;width:1px;height:30px;background:#e6e6e6"></div>
<div class="t" style="left:570.2px;top:692.0px;width:37.0px;text-align:center;line-height:16px;color:#333;">5</div>
<div class="r" style="left:673.4px;top:685px;width:1px;height:30px;background:#e6e6e6"></div>
<div class="t" style="left:607.2px;top:692.0px;width:66.19999999999993px;text-align:center;line-height:16px;color:#333;">下一页</div>
<div class="r" style="left:728px;top:685px;width:1px;height:30px;background:#e6e6e6"></div>
<div class="t" style="left:673.4px;top:692.0px;width:54.60000000000002px;text-align:center;line-height:16px;color:#333;">尾页</div>
<div class="t " style="left:737.3px;top:692.00px;line-height:16px;color:#333;font-size:12px;">共 5 页</div>
<div class="r" style="left:795px;top:685px;width:73.5px;height:30px;border:1px solid #e6e6e6;border-radius:2px;background:#fff"></div>
<div class="t " style="left:803px;top:692.00px;line-height:16px;color:#333;font-size:12px;">10 条/页</div>
<svg style="left:853px;top:697.0px" width="9" height="6" viewBox="0 0 9 6"><path d="M1 1 L4.5 4.5 L8 1" fill="none" stroke="#222" stroke-width="1.8"/></svg>
<div class="t " style="left:889.4px;top:692.00px;line-height:16px;color:#999;font-size:12px;">到第</div>
<div class="r" style="left:923.4px;top:685px;width:37.9px;height:30px;border:1px solid #e6e6e6;border-radius:2px;background:#fff"></div>
<div class="t " style="left:939px;top:692.00px;line-height:16px;color:#333;font-size:12px;">1</div>
<div class="t " style="left:972px;top:692.00px;line-height:16px;color:#999;font-size:12px;">页</div>
<div class="r" style="left:997.4px;top:685px;width:38.9px;height:30px;border:1px solid #e6e6e6;border-radius:2px;background:#fff"></div>
<div class="t " style="left:1005px;top:693.00px;line-height:16px;color:#333;font-size:12px;">确定</div>
<div class="r" style="left:231px;top:739.2px;width:1656px;height:9px;background:#f1f6f9;border-radius:4px"></div>
<div class="r" style="left:231px;top:739.7px;width:1044px;height:7.6px;background:#999;border-radius:4px"></div></body></html>
